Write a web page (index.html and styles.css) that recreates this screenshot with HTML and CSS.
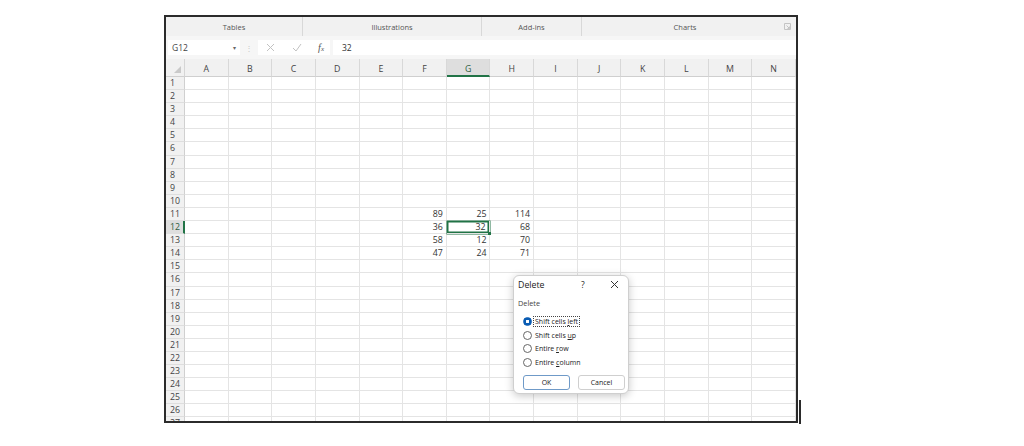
FILE: index.html
```html
<!DOCTYPE html>
<html lang="en">
<head>
    <meta charset="UTF-8">
    <meta name="viewport" content="width=device-width, initial-scale=1.0">
    <title>Delete cells</title>
    <link rel="stylesheet" href="styles.css">
</head>
<body>
    <div class="sheet-frame">
        <!-- Ribbon group captions -->
        <div class="ribbon">
            <div class="group g-tables">Tables</div>
            <div class="group g-illus">Illustrations</div>
            <div class="group g-addins">Add-ins</div>
            <div class="group g-charts">
                <span class="group-label">Charts</span>
                <svg class="launcher" width="7" height="7" viewBox="0 0 7 7">
                    <path d="M0.5 0.5h6v6h-6z" fill="none" stroke="#c4c4c4" stroke-width="1"/>
                    <path d="M2.5 2.5l3 3M3.5 5.5h2v-2" fill="none" stroke="#c4c4c4" stroke-width="1"/>
                </svg>
            </div>
        </div>

        <!-- Formula bar -->
        <div class="formula-bar">
            <div class="name-box">
                <span>G12</span>
                <span class="caret">▾</span>
            </div>
            <div class="grip">⋮</div>
            <div class="fx-buttons">
                <svg width="9" height="9" viewBox="0 0 9 9">
                    <path d="M1 1l7 7M8 1l-7 7" stroke="#c2c2c2" stroke-width="1"/>
                </svg>
                <svg width="10" height="9" viewBox="0 0 10 9">
                    <path d="M1 5l3 3 5-7" fill="none" stroke="#c2c2c2" stroke-width="1"/>
                </svg>
                <span class="fx">f<small>x</small></span>
            </div>
            <div class="formula-input">32</div>
        </div>

        <!-- Worksheet grid -->
        <div class="grid" id="grid"></div>
    </div>

    <!-- Delete dialog -->
    <div class="dialog">
        <div class="dialog-title">
            <span class="title-text">Delete</span>
            <span class="help">?</span>
            <svg class="close" width="9" height="9" viewBox="0 0 9 9">
                <path d="M1 1l7 7M8 1l-7 7" stroke="#333" stroke-width="1"/>
            </svg>
        </div>
        <div class="dialog-body">
            <div class="section-label">Delete</div>
            <label class="option">
                <span class="radio checked"></span>
                <span class="focus">Shift cells <u>l</u>eft</span>
            </label>
            <label class="option">
                <span class="radio"></span>
                <span>Shift cells <u>u</u>p</span>
            </label>
            <label class="option">
                <span class="radio"></span>
                <span>Entire <u>r</u>ow</span>
            </label>
            <label class="option">
                <span class="radio"></span>
                <span>Entire <u>c</u>olumn</span>
            </label>
            <div class="dialog-buttons">
                <button class="btn btn-ok">OK</button>
                <button class="btn">Cancel</button>
            </div>
        </div>
    </div>

    <div class="edge-mark"></div>

    <script>
        const columnas = ['A','B','C','D','E','F','G','H','I','J','K','L','M','N'];
        const datos = {
            11: { F: 89, G: 25, H: 114 },
            12: { F: 36, G: 32, H: 68 },
            13: { F: 58, G: 12, H: 70 },
            14: { F: 47, G: 24, H: 71 }
        };
        const grid = document.getElementById('grid');

        // Fila de encabezados
        const esquina = document.createElement('div');
        esquina.className = 'cell corner';
        grid.appendChild(esquina);
        columnas.forEach(col => {
            const h = document.createElement('div');
            h.className = 'cell col-head' + (col === 'G' ? ' active' : '');
            h.textContent = col;
            grid.appendChild(h);
        });

        // Filas
        for (let r = 1; r <= 27; r++) {
            const num = document.createElement('div');
            num.className = 'cell row-head' + (r === 12 ? ' active' : '');
            num.textContent = r;
            grid.appendChild(num);
            columnas.forEach(col => {
                const c = document.createElement('div');
                c.className = 'cell';
                if (datos[r] && datos[r][col] !== undefined) {
                    c.textContent = datos[r][col];
                }
                if (r === 12 && col === 'G') c.classList.add('selected');
                grid.appendChild(c);
            });
        }
    </script>
</body>
</html>
```

FILE: styles.css
```css
body {
    margin: 0;
    background: #fff;
    font-family: "Open Sans", "Noto Sans", sans-serif;
    color: #333;
}
.sheet-frame {
    width: 630px;
    height: 404px;
    margin: 15px 0 0 164px;
    border: 2px solid #2b2b2b;
    overflow: hidden;
    background: #fff;
}

/* Ribbon */
.ribbon {
    display: flex;
    height: 19px;
    background: #f1f1f1;
    font-size: 7.5px;
    color: #555;
}
.group {
    display: flex;
    align-items: center;
    justify-content: center;
    border-right: 1px solid #d8d8d8;
    box-sizing: border-box;
}
.g-tables { width: 137px; }
.g-illus { width: 179px; }
.g-addins { width: 100px; }
.g-charts {
    flex: 1;
    border-right: none;
    padding-right: 3px;
}
.group-label {
    flex: 1;
    text-align: center;
    padding-left: 4px;
}
.launcher {
    margin-right: 2px;
}

/* Formula bar */
.formula-bar {
    display: flex;
    align-items: center;
    height: 23px;
    background: #f6f6f6;
    font-size: 8.5px;
}
.name-box {
    display: flex;
    justify-content: space-between;
    align-items: center;
    width: 72px;
    height: 15px;
    margin-left: 2px;
    padding: 0 4px 0 4px;
    box-sizing: border-box;
    background: #fff;
    color: #444;
}
.caret {
    font-size: 6px;
    color: #666;
}
.grip {
    width: 18px;
    text-align: center;
    color: #c8c8c8;
    font-size: 8px;
}
.fx-buttons {
    display: flex;
    align-items: center;
    justify-content: space-between;
    width: 72px;
    height: 15px;
    padding: 0 6px 0 8px;
    box-sizing: border-box;
    background: #fff;
}
.fx {
    font-family: "Liberation Serif", serif;
    font-style: italic;
    font-size: 10px;
    color: #555;
}
.fx small {
    font-size: 7px;
}
.formula-input {
    flex: 1;
    height: 15px;
    line-height: 15px;
    margin-left: 3px;
    padding-left: 9px;
    background: #fff;
    color: #333;
}

/* Grid */
.grid {
    display: grid;
    grid-template-columns: 19px repeat(14, 1fr);
    grid-template-rows: 18px;
    grid-auto-rows: 13.1px;
    font-size: 8.8px;
}
.cell {
    box-sizing: border-box;
    border-right: 1px solid #e4e4e4;
    border-bottom: 1px solid #e4e4e4;
    text-align: right;
    padding-right: 3px;
    line-height: 12px;
    color: #333;
    position: relative;
}
.corner {
    background: #f1f1f1;
    border-right: 1px solid #d6d6d6;
    border-bottom: 1px solid #cfcfcf;
}
.corner::after {
    content: "";
    position: absolute;
    right: 3px;
    bottom: 3px;
    border-left: 7px solid transparent;
    border-bottom: 7px solid #c9c9c9;
}
.col-head {
    background: #f1f1f1;
    text-align: center;
    padding: 4px 0 0;
    line-height: 12px;
    color: #444;
    border-right: 1px solid #d8d8d8;
    border-bottom: 1px solid #cfcfcf;
}
.col-head.active {
    background: #dedede;
    border-bottom: 2px solid #217346;
    color: #2f5f3f;
}
.row-head {
    background: #f1f1f1;
    text-align: left;
    padding: 0 0 0 4px;
    color: #444;
    border-right: 1px solid #d0d0d0;
    border-bottom: 1px solid #dedede;
}
.row-head.active {
    background: #dedede;
    border-right: 2px solid #217346;
    color: #2f5f3f;
}
.selected {
    box-shadow: 0 0 0 0.5px #217346, inset 0 0 0 1.5px #217346;
    padding-right: 4px;
    z-index: 1;
}
.selected::after {
    content: "";
    position: absolute;
    right: -2px;
    bottom: -2px;
    width: 3px;
    height: 3px;
    background: #217346;
}

/* Dialog */
.dialog {
    position: absolute;
    left: 513px;
    top: 275px;
    width: 116px;
    height: 119px;
    box-sizing: border-box;
    background: #fff;
    border: 1px solid #cfcfcf;
    border-radius: 6px;
    box-shadow: 0 2px 8px rgba(0,0,0,0.22);
    font-size: 7.5px;
    color: #333;
    z-index: 5;
}
.dialog-title {
    display: flex;
    align-items: center;
    height: 17px;
    padding: 0 0 0 4px;
    font-size: 8.8px;
    color: #222;
}
.title-text {
    width: 63px;
}
.help {
    width: 27px;
    font-size: 8.5px;
}
.close {
    margin-left: 2px;
}
.dialog-body {
    padding: 5px 0 0 4px;
}
.section-label {
    height: 12px;
    margin-bottom: 5px;
    font-size: 7.3px;
    color: #444;
}
.option {
    display: flex;
    align-items: center;
    height: 13.5px;
    padding-left: 5px;
    font-size: 7px;
    color: #222;
}
.radio {
    width: 7px;
    height: 7px;
    border: 1px solid #666;
    border-radius: 50%;
    margin-right: 3px;
    background: #fff;
}
.radio.checked {
    border-color: #0a5cb3;
    background: radial-gradient(circle, #fff 0 1.4px, #0a5cb3 1.9px);
}
.focus {
    outline: 1px dotted #444;
    outline-offset: 0;
    padding: 0 1px;
    margin-left: -1px;
}
.dialog-buttons {
    display: flex;
    gap: 8px;
    margin-top: 6px;
    padding-left: 5px;
}
.btn {
    width: 47px;
    height: 15px;
    padding: 0;
    font-family: "Open Sans", "Noto Sans", sans-serif;
    font-size: 7px;
    color: #222;
    background: #fff;
    border: 1px solid #cfcfcf;
    border-radius: 3px;
}
.btn-ok {
    border-color: #6f9ac8;
}

.edge-mark {
    position: absolute;
    left: 799px;
    top: 400px;
    width: 2px;
    height: 24px;
    background: #2b2b2b;
}
```
